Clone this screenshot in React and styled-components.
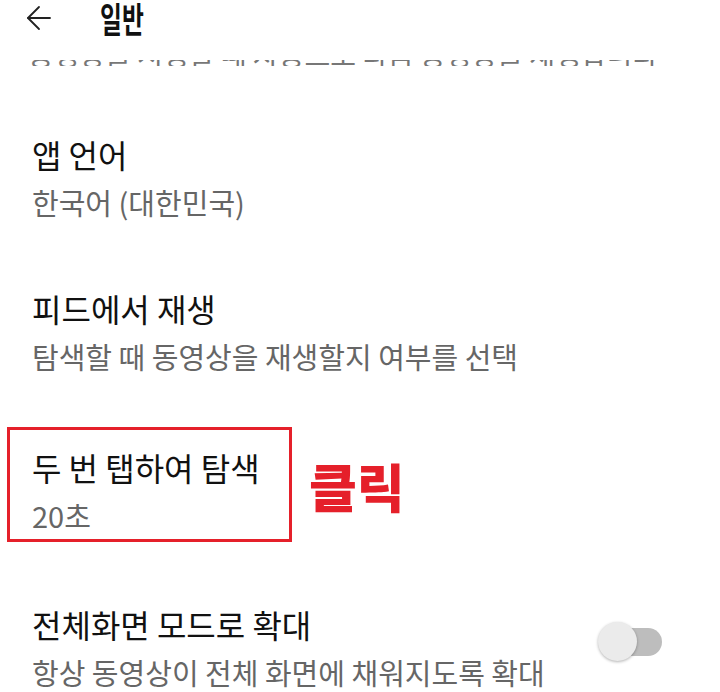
import React from 'react';
import styled, { createGlobalStyle } from 'styled-components';

const GlobalStyle = createGlobalStyle`
  html, body {
    margin: 0;
    padding: 0;
    background: #fff;
  }
  body {
    font-family: "Noto Sans CJK KR", "Noto Sans", sans-serif;
  }
`;

const Screen = styled.div`
  width: 720px;
  height: 692px;
  overflow: hidden;
  background: #fff;
  color: #111;
`;

const Header = styled.header`
  display: flex;
  align-items: center;
  height: 36px;
  padding-left: 25px;
`;

const BackButton = styled.button`
  display: flex;
  align-items: center;
  justify-content: center;
  width: 28px;
  height: 28px;
  padding: 0;
  border: 0;
  background: none;
  margin-right: 47px;
`;

const Title = styled.h1`
  margin: 0;
  font-size: 35px;
  line-height: 36px;
  font-weight: 700;
  color: #111;
  transform: scaleX(0.68);
  transform-origin: left center;
`;

const ClippedLine = styled.div`
  height: 6px;
  margin-top: 24px;
  padding-left: 28px;
  overflow: hidden;
  color: #777;
  font-size: 28px;
  line-height: 28px;
  white-space: nowrap;

  span {
    display: block;
    margin-top: -20px;
  }
`;

const List = styled.div`
  display: flex;
  flex-direction: column;
  padding-top: 69px;
`;

const Item = styled.div`
  display: flex;
  align-items: center;
  justify-content: space-between;
  padding: 0 58px 0 32px;
  margin-bottom: ${p => p.$gap || 0}px;
`;

const Texts = styled.div`
  display: flex;
  flex-direction: column;
  gap: 12px;
`;

const ItemTitle = styled.div`
  font-size: 32px;
  line-height: 38px;
  color: #111;
`;

const ItemSub = styled.div`
  font-size: 29px;
  line-height: 34px;
  color: #666;
`;

const AnnotatedRow = styled.div`
  display: flex;
  align-items: center;
  gap: 17px;
  margin-bottom: ${p => p.$gap || 0}px;
`;

const RedBox = styled.div`
  box-sizing: border-box;
  width: 285px;
  margin-left: 7px;
  padding: 18px 0 7px 22px;
  border: 3px solid #e5202a;
`;

const ClickLabel = styled.span`
  font-size: 52px;
  line-height: 56px;
  font-weight: 900;
  color: #e5202a;
  margin-top: 2px;
`;

const Toggle = styled.div`
  position: relative;
  width: 62px;
  height: 28px;
  margin-bottom: 10px;
  border-radius: 14px;
  background: #bdbdbd;

  &::after {
    content: "";
    position: absolute;
    left: -2px;
    top: -6px;
    width: 39px;
    height: 39px;
    border-radius: 50%;
    background: #ebebeb;
    box-shadow: 0 1px 3px rgba(0, 0, 0, 0.3);
  }
`;

const BackIcon = () => (
  <svg width="26" height="26" viewBox="0 0 26 26" fill="none" stroke="#222" strokeWidth="1.8" strokeLinecap="round" strokeLinejoin="round">
    <path d="M24 13H2" />
    <path d="M13 2L2 13l11 11" />
  </svg>
);

export default function App() {
  return (
    <Screen>
      <GlobalStyle />
      <Header>
        <BackButton><BackIcon /></BackButton>
        <Title>일반</Title>
      </Header>
      <ClippedLine>
        <span>동영상을 시청할 때 자동으로 다음 동영상을 재생합니다</span>
      </ClippedLine>
      <List>
        <Item $gap={70}>
          <Texts>
            <ItemTitle>앱 언어</ItemTitle>
            <ItemSub>한국어 (대한민국)</ItemSub>
          </Texts>
        </Item>
        <Item $gap={54}>
          <Texts>
            <ItemTitle>피드에서 재생</ItemTitle>
            <ItemSub>탐색할 때 동영상을 재생할지 여부를 선택</ItemSub>
          </Texts>
        </Item>
        <AnnotatedRow $gap={63}>
          <RedBox>
            <Texts>
              <ItemTitle>두 번 탭하여 탐색</ItemTitle>
              <ItemSub>20초</ItemSub>
            </Texts>
          </RedBox>
          <ClickLabel>클릭</ClickLabel>
        </AnnotatedRow>
        <Item>
          <Texts>
            <ItemTitle>전체화면 모드로 확대</ItemTitle>
            <ItemSub>항상 동영상이 전체 화면에 채워지도록 확대</ItemSub>
          </Texts>
          <Toggle />
        </Item>
      </List>
    </Screen>
  );
}
